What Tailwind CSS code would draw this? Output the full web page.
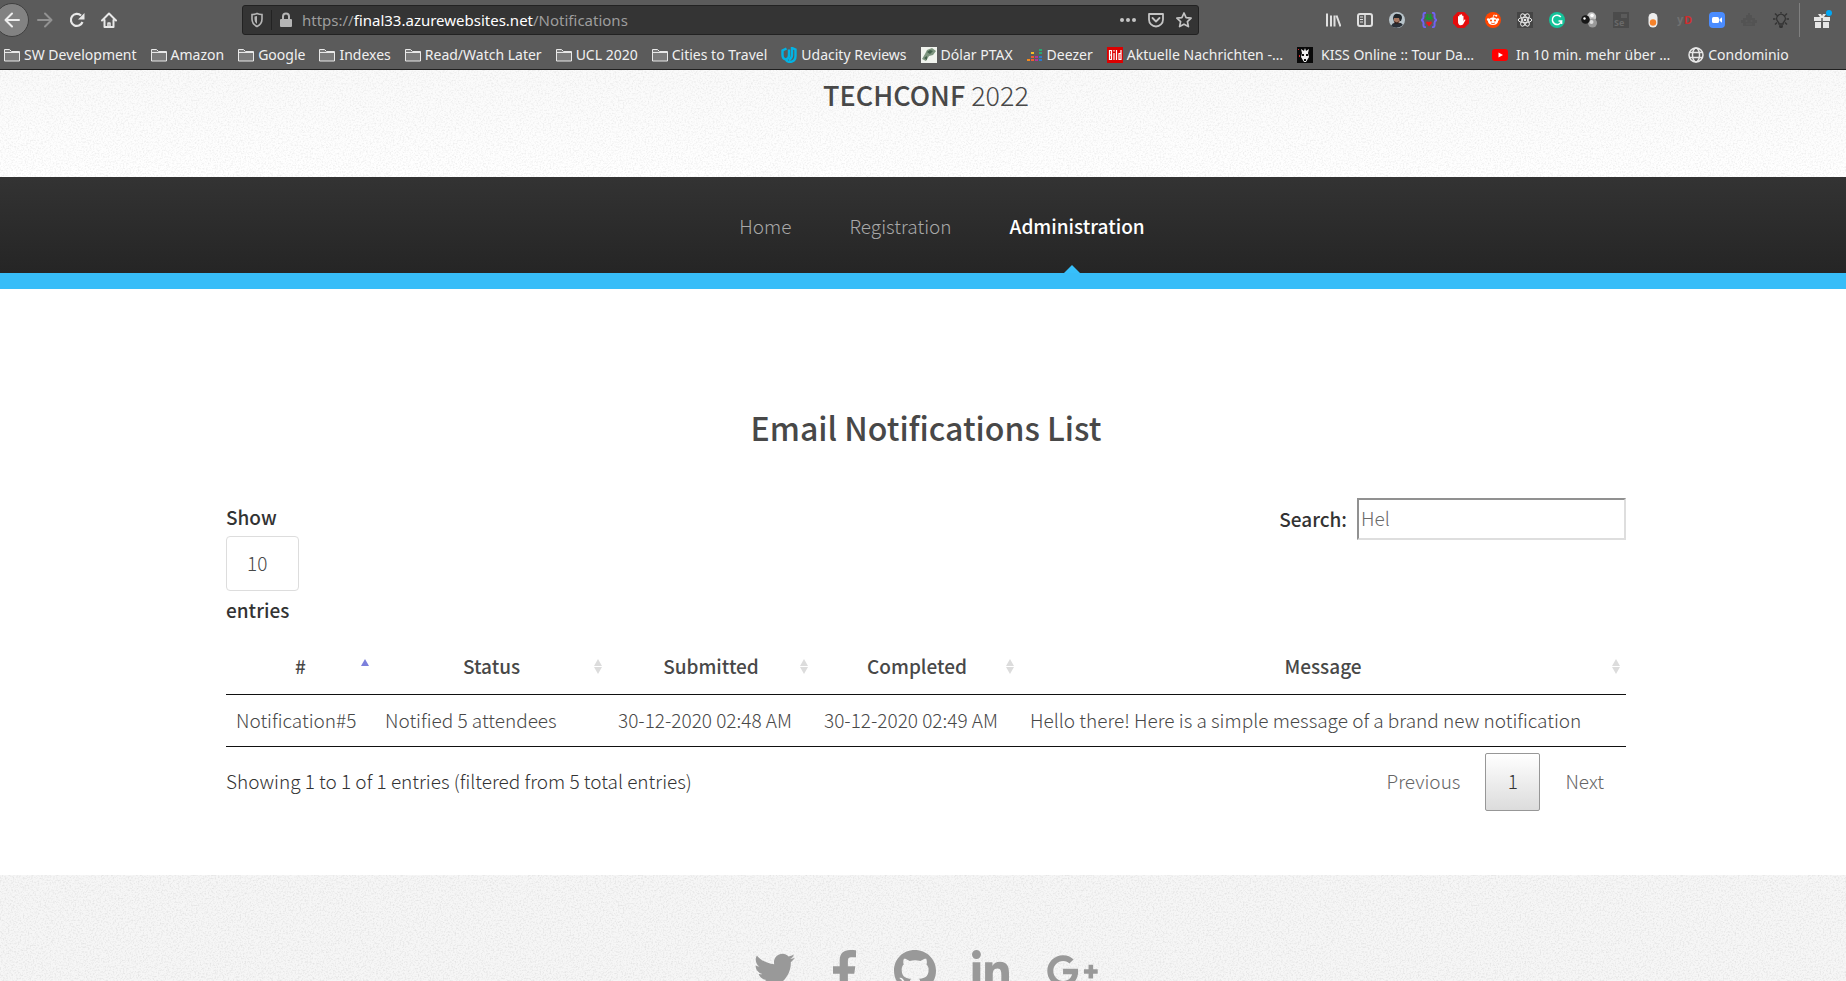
<!DOCTYPE html>
<html lang="en">
<head>
<meta charset="utf-8">
<title>TechConf 2022 - Notifications</title>
<script src="https://cdn.jsdelivr.net/npm/@tailwindcss/browser@4"></script>
</head>
<body class="flex h-screen flex-col overflow-hidden bg-white font-['Noto_Sans_CJK_SC','Source_Sans_Pro',sans-serif] text-[19px] font-light text-[#484848]">

<svg class="hidden">
  <symbol id="folder" viewBox="0 0 16 16"><path d="M.5 14V2.500h5l2 2h8V14z" fill="#7b7b7b" stroke="#e8e8e8"/><path d="M.5 5.500h15" stroke="#e8e8e8"/></symbol>
  <symbol id="sort" viewBox="0 0 8 15"><path d="M4 0l4 7H0zM4 15l4-7H0z" fill="#dcdcdc"/></symbol>
</svg>

<!-- Browser chrome -->
<div class="shrink-0 border-b border-[#1f1f1f] bg-[#5b5b5b] font-['Noto_Sans',sans-serif] text-[15px] font-normal text-[#f0f0f0]">
  <div class="flex h-10 items-center">
    <div class="flex w-[242px] shrink-0 items-center gap-4">
      <button aria-label="Back" class="-ml-[5px] flex size-[34px] shrink-0 items-center justify-center rounded-full border border-[#404040] bg-[#828282]"><svg class="size-4" viewBox="0 0 16 16" fill="none" stroke="#eee" stroke-width="2" stroke-linecap="round" stroke-linejoin="round"><path d="M15 8H2M8 1.500L1.500 8 8 14.500"/></svg></button>
      <button aria-label="Forward" class="-ml-2"><svg class="size-4" viewBox="0 0 16 16" fill="none" stroke="#929292" stroke-width="2" stroke-linecap="round" stroke-linejoin="round"><path d="M1 8h13M8 1.500L14.500 8 8 14.500"/></svg></button>
      <button aria-label="Reload"><svg class="size-4" viewBox="0 0 16 16" fill="none" stroke="#e8e8e8" stroke-width="2.200"><path d="M13.500 10A6 6 0 1 1 12 3.500"/><path d="M15.500 1v6.500H9z" fill="#e8e8e8" stroke="none"/></svg></button>
      <button aria-label="Home"><svg class="size-4" viewBox="0 0 16 16" fill="none" stroke="#e8e8e8" stroke-width="2" stroke-linejoin="round" stroke-linecap="round"><path d="M1 8.500L8 1.500l7 7M3.500 8v7h9V8"/><path d="M7 15v-4h2v4" stroke-width="1.500"/></svg></button>
    </div>
    <div class="flex h-[30px] w-[957px] shrink-0 items-center rounded-[3px] border border-[#222] bg-[#343434] px-2 text-[#9d9d9d]">
      <svg class="h-4 w-3" viewBox="0 0 12 16" fill="none" stroke="#b5b5b5" stroke-width="1.600"><path d="M1 2.500Q4 2.500 6 1.500q2 1 5 1V7q0 5-5 7.500Q1 12 1 7z"/><path d="M6 4v8Q3.500 10.500 3.500 7V4.500z" fill="#b5b5b5" stroke="none"/></svg>
      <span class="mx-2 h-5 w-px bg-[#222]"></span>
      <svg class="h-4 w-3" viewBox="0 0 12 16"><path d="M3 8V4.500a3 3 0 0 1 6 0V8" fill="none" stroke="#b5b5b5" stroke-width="2"/><rect y="7" width="12" height="8" rx="1" fill="#b5b5b5"/></svg>
      <span class="ml-[10px] flex-1 whitespace-nowrap">https://<span class="text-white">final33.azurewebsites.net</span>/Notifications</span>
      <div class="flex items-center gap-3">
        <button aria-label="Page actions"><svg class="size-4" viewBox="0 0 16 16" fill="#c4c4c4"><circle cx="2" cy="8" r="2"/><circle cx="8" cy="8" r="2"/><circle cx="14" cy="8" r="2"/></svg></button>
        <button aria-label="Save to Pocket"><svg class="size-4" viewBox="0 0 16 16" fill="none" stroke="#c4c4c4" stroke-width="1.800" stroke-linejoin="round" stroke-linecap="round"><path d="M1 2h14v5.500a7 7 0 0 1-14 0z"/><path d="M4.500 6L8 9.500 11.500 6"/></svg></button>
        <button aria-label="Bookmark" class="-mr-[2px]"><svg class="size-4" viewBox="0 0 16 16" fill="none" stroke="#c4c4c4" stroke-width="1.700" stroke-linejoin="round"><path d="M8 1l2.100 4.600 5 .6-3.700 3.400 1 5L8 12.200l-4.400 2.400 1-5L.9 6.200l5-.6z"/></svg></button>
      </div>
    </div>
    <div class="ml-auto flex items-center gap-4 pr-[10px]">
      <svg class="size-4" viewBox="0 0 16 16" stroke="#e0e0e0" stroke-width="2"><path d="M2 1.500v13M6 3.500v11M9.500 3.500v11M11.500 3.500l4 11"/></svg>
      <svg class="size-4" viewBox="0 0 16 16" fill="none" stroke="#e0e0e0" stroke-width="2"><rect x="1" y="2" width="14" height="12" rx="2"/><path d="M8 2v12" stroke-width="1.500"/><path d="M3 5h3M3 7.500h3M3 10h3" stroke-width="1.200"/></svg>
      <svg class="size-4" viewBox="0 0 16 16"><circle cx="8" cy="8" r="8" fill="#b8c4ca"/><path d="M4 6q1-5 5-4 4 0 4 4l-1 3-7 1z" fill="#20262b"/><path d="M5 6h5l1 4-3 3-3-3z" fill="#a87760"/><path d="M2 14q2-4 5-3l5 0 2 2Q8 18 2 14z" fill="#2a3038"/><path d="M5 9l3 1.500L10 9l-1 3H6z" fill="#30211e"/></svg>
      <svg class="size-4" viewBox="0 0 16 16"><path d="M5 .8Q2 .5 2.500 4q.3 3-2 4 2.300 1 2 4-.5 3.500 2.500 3.200M11 .8q3-.3 2.500 3.200-.3 3 2 4-2.300 1-2 4 .5 3.500-2.500 3.200" fill="none" stroke="#6f62f2" stroke-width="2"/><path d="M6.500 2v5M9.500 2v5M4.500 6q3.500 2 7 0" stroke="#159b2c" stroke-width="1.800" fill="none"/><path d="M8 14.500L5 11q0-2.500 3-1 3-1.500 3 1z" fill="#ef1616"/></svg>
      <svg class="size-4" viewBox="0 0 16 16"><path d="M4.700 0h6.600L16 4.700v6.600L11.300 16H4.700L0 11.300V4.700z" fill="#e40d0d"/><path d="M5 9V4.500q.7-.8 1.300 0V3q.8-.9 1.400 0v-.5q.8-.7 1.400 0V4q.8-.8 1.400 0v5l1-1.500q1-.3 1 .5L10 12.500q-2 1.500-4 .3Q4.700 12 5 9z" fill="#fff"/></svg>
      <svg class="size-4" viewBox="0 0 16 16"><circle cx="8" cy="8" r="8" fill="#ff4500"/><ellipse cx="8" cy="9.300" rx="5" ry="3.700" fill="#fff"/><circle cx="3.200" cy="7.600" r="1.300" fill="#fff"/><circle cx="12.800" cy="7.600" r="1.300" fill="#fff"/><path d="M8 6l.7-3 2.500.6" stroke="#fff" fill="none" stroke-width=".8"/><circle cx="11.300" cy="3.700" r="1" fill="#fff"/><circle cx="6" cy="8.500" r="1" fill="#ff4500"/><circle cx="10" cy="8.500" r="1" fill="#ff4500"/><path d="M6 11q2 1.300 4 0" stroke="#ff4500" fill="none" stroke-width=".8"/></svg>
      <svg class="size-4" viewBox="0 0 16 16"><path d="M0 0h16v16H0z" fill="#454545"/><g fill="none" stroke="#e8e8e8"><ellipse cx="8" cy="8" rx="6.800" ry="2.700"/><ellipse cx="8" cy="8" rx="6.800" ry="2.700" transform="rotate(60 8 8)"/><ellipse cx="8" cy="8" rx="6.800" ry="2.700" transform="rotate(120 8 8)"/></g><circle cx="8" cy="8" r="1.300" fill="#e8e8e8"/></svg>
      <svg class="size-4" viewBox="0 0 16 16"><circle cx="8" cy="8" r="8" fill="#15c39a"/><path d="M11.800 5A4.700 4.700 0 1 0 12.600 9H9.500M12.600 9v3" fill="none" stroke="#fff" stroke-width="1.500"/></svg>
      <svg class="size-4" viewBox="0 0 16 16"><circle cx="10.500" cy="5" r="4.700" fill="#c9c9c9"/><circle cx="11.500" cy="11" r="4.500" fill="#9a9a9a"/><circle cx="10.500" cy="10" r="2" fill="#ddd"/><circle cx="4.500" cy="7.500" r="4.300" fill="#181818"/><circle cx="3.500" cy="6.500" r="1.200" fill="#fff"/><circle cx="11" cy="3.500" r="1.800" fill="#fff"/></svg>
      <svg class="size-4" viewBox="0 0 16 16"><path d="M0 0h16v16H0z" fill="#4b4b4b"/><path d="M8 2h6v4H8z" fill="#5b5b5b"/><text x="1" y="14" font-size="9" font-weight="700" fill="#696969">Se</text></svg>
      <svg class="size-4" viewBox="0 0 16 16"><rect x="3.500" y="1" width="9" height="14.500" rx="4.500" fill="#eee"/><circle cx="8" cy="10.500" r="3.200" fill="#f5822a"/></svg>
      <svg class="size-4" viewBox="0 0 16 16" font-weight="700" font-size="11"><text x="0" y="11" fill="#717171">y</text><text x="7" y="12" fill="#cf2d2d">D</text></svg>
      <svg class="size-4" viewBox="0 0 16 16"><rect width="16" height="16" rx="4" fill="#4a8cff"/><rect x="3" y="5" width="7" height="6" rx="1.500" fill="#fff"/><path d="M10.500 7.300L13 5.300v5.400l-2.500-2z" fill="#fff"/></svg>
      <svg class="size-4" viewBox="0 0 16 16" fill="#535353"><path d="M2 6h12v8H2zM0 8h16v3H0zM7 1h2v5H7zM5 3h6v3H5z"/><circle cx="5.500" cy="9" r="1" fill="#5b5b5b"/><circle cx="10.500" cy="9" r="1" fill="#5b5b5b"/><path d="M5 12h6" stroke="#5b5b5b"/></svg>
      <svg class="size-4" viewBox="0 0 16 16" fill="none" stroke="#333" stroke-width="1.400"><path d="M6 12q0-1.500-1.200-2.500a4.300 4.300 0 1 1 6.400 0Q10 10.500 10 12zM6 14h4M6.500 15.500h3M8 0v1.500M0 7h2.500M13.500 7H16M2 1.500l2 2M14 1.500l-2 2M2 12.500l2-2M14 12.500l-2-2"/></svg>
      <span class="-ml-[6px] -mr-[2px] h-[34px] w-px bg-[#808080]"></span>
      <svg class="h-5 w-[22px]" viewBox="0 0 22 20" fill="#e6e6e6"><path d="M0 7h6L4 4h3l1 2 1-2h3l-2 3h6v4H0zM1 12h6v6H1zM9 12h6v6H9z"/><path d="M8 8v10" stroke="#5b5b5b" stroke-width="1.500"/><circle cx="15" cy="3" r="3" fill="#00a7f5"/></svg>
    </div>
  </div>
  <nav aria-label="Bookmarks" class="flex h-[29px] items-center gap-[14px] whitespace-nowrap pl-1 text-sm">
    <a href="#" class="flex items-center gap-1"><svg class="size-4"><use href="#folder"/></svg>SW Development</a>
    <a href="#" class="flex items-center gap-1"><svg class="size-4"><use href="#folder"/></svg>Amazon</a>
    <a href="#" class="flex items-center gap-1"><svg class="size-4"><use href="#folder"/></svg>Google</a>
    <a href="#" class="flex items-center gap-1"><svg class="size-4"><use href="#folder"/></svg>Indexes</a>
    <a href="#" class="flex items-center gap-1"><svg class="size-4"><use href="#folder"/></svg>Read/Watch Later</a>
    <a href="#" class="flex items-center gap-1"><svg class="size-4"><use href="#folder"/></svg>UCL 2020</a>
    <a href="#" class="flex items-center gap-1"><svg class="size-4"><use href="#folder"/></svg>Cities to Travel</a>
    <a href="#" class="flex items-center gap-1"><svg class="size-4" viewBox="0 0 16 16" fill="none" stroke="#02b3e4" stroke-width="2.400"><path d="M5.500 1.500L1.500 3.500V8q0 4 3.500 4.500 3-.5 3-4.500V2.500"/><path d="M5 13q1.500 2 4.500 2 5-1 5-6V2.500L11 1v7q0 3-3 5"/></svg>Udacity Reviews</a>
    <a href="#" class="flex items-center gap-1"><svg class="size-4" viewBox="0 0 16 16"><path d="M0 0h16v16H0z" fill="#f1f4ee"/><path d="M1 12l3-5 2-4 5-2 4 3-3 4-4 1-3 5-2-1z" fill="#7d957e"/><path d="M6 5l3-2 3 1-3 3zM3 11l3-2v4z" fill="#42604a"/></svg>Dólar PTAX</a>
    <a href="#" class="flex items-center gap-1"><svg class="size-4" viewBox="0 0 16 16"><path d="M0 12h3v2H0z" fill="#f48a1d"/><path d="M4 12h3v2H4zM4 9h3v2H4z" fill="#ef5b30"/><path d="M4 5h3v2H4z" fill="#f6bd27"/><path d="M8 12h3v2H8zM8 9h3v2H8z" fill="#b43498"/><path d="M12 12h3v2h-3zM12 9h3v2h-3z" fill="#2a79cc"/><path d="M12 5h3v2h-3zM12 2h3v2h-3z" fill="#28a873"/></svg>Deezer</a>
    <a href="#" class="flex items-center gap-1"><svg class="size-4" viewBox="0 0 16 16"><path d="M0 0h16v16H0z" fill="#d00"/><path d="M2.500 3v10M2 3.500h2.500v9H2M3 8h2M7 6v7M7 3v1.500M9.500 3v10M14 3v10M14 12.500h-2v-6h2" fill="none" stroke="#fff" stroke-width="1.200"/></svg>Aktuelle Nachrichten -…</a>
    <a href="#" class="flex items-center gap-2"><svg class="size-4" viewBox="0 0 16 16"><path d="M0 0h16v16H0z" fill="#090909"/><path d="M5 6L4 2l3 2 1-3 1 3 3-2-1 4 1 4-3 5H7l-3-5z" fill="#eee"/><path d="M5 7h2v2H5zM9 7h2v2H9zM7 12h2v2H7z" fill="#111"/><path d="M1 2h1v1H1zM2 8h1v2H2z" fill="#df2a2a"/></svg>KISS Online :: Tour Da…</a>
    <a href="#" class="ml-1 flex items-center gap-2"><svg class="size-4" viewBox="0 0 16 16"><rect y="2" width="16" height="12" rx="3" fill="#f00"/><path d="M6.500 5.500L11 8l-4.500 2.500z" fill="#fff"/></svg>In 10 min. mehr über …</a>
    <a href="#" class="ml-1 flex items-center gap-1"><svg class="size-4" viewBox="0 0 16 16" fill="none" stroke="#e8e8e8" stroke-width="1.500"><circle cx="8" cy="8" r="7"/><ellipse cx="8" cy="8" rx="3.500" ry="7"/><path d="M1.500 5.500h13M1.500 10.500h13"/></svg>Condominio</a>
  </nav>
</div>

<!-- Site header -->
<header class="relative flex h-[107px] shrink-0 justify-center bg-gradient-to-b from-[#fafafa] to-white pl-[6px] pt-[5px]">
  <svg class="absolute inset-0 h-full w-full opacity-12" aria-hidden="true"><filter id="grain" x="0" y="0" width="100%" height="100%" color-interpolation-filters="sRGB"><feTurbulence type="fractalNoise" baseFrequency=".6" numOctaves="2"/><feColorMatrix values="0 0 0 0 .5  0 0 0 0 .5  0 0 0 0 .5  2.500 0 0 0 -1.100"/></filter><rect width="100%" height="100%" filter="url(#grain)"/></svg>
  <h1 class="relative text-[27px] leading-10 font-light"><strong class="font-medium">TECHCONF</strong> 2022</h1>
</header>
<nav aria-label="Main" class="flex h-24 shrink-0 items-center justify-center gap-[58px] bg-gradient-to-b from-[#333] to-[#252525] pt-[2px] pl-[38px] text-[#a8a8a8]">
  <a href="#">Home</a>
  <a href="#">Registration</a>
  <a href="#" class="relative flex h-full items-center font-medium text-white">Administration<svg class="absolute bottom-0 left-1/2 -ml-[13px] h-2 w-4" viewBox="0 0 16 8"><path d="M8 0l8 8H0z" fill="#37c0fb"/></svg></a>
</nav>
<div class="h-4 shrink-0 bg-[#37bdf8]"></div>

<!-- Notification list -->
<main class="h-[586px] shrink-0 pl-[6px]">
  <div class="mx-auto max-w-[1400px]">
    <h2 class="pt-[113px] text-center text-[32px] leading-[50px] font-medium">Email Notifications List</h2>
    <div class="flex items-start justify-between pt-[46px] font-medium text-[#333]">
      <label class="flex flex-col leading-[37px]">Show
        <select class="mt-px h-[55px] w-[73px] appearance-none rounded border border-[#ddd] bg-white px-5 pb-[2px] font-light text-[#484848]"><option>10</option></select>
        entries</label>
      <label class="flex items-center gap-[10px] leading-10">Search: <input type="text" value="Hel" class="h-[42px] w-[269px] border-2 border-t-[#919191] border-r-[#dedede] border-b-[#dedede] border-l-[#919191] px-[2px] pb-1 font-light text-[#6a6a6a] outline-none"></label>
    </div>
    <table class="mt-[10px] w-full table-fixed border-collapse border-b border-[#111]">
      <colgroup><col class="w-[149px]"><col class="w-[233px]"><col class="w-[206px]"><col class="w-[206px]"><col></colgroup>
      <thead>
        <tr class="h-[56px] border-b border-[#111]">
          <th class="relative px-[18px] font-medium">#<svg class="absolute top-[21px] right-[6px] h-[7px] w-2" viewBox="0 0 8 7"><path d="M4 0l4 7H0z" fill="#7c80dc"/></svg></th>
          <th class="relative px-[18px] font-medium">Status<svg class="absolute top-[21px] right-[6px] h-[15px] w-2"><use href="#sort"/></svg></th>
          <th class="relative px-[18px] font-medium">Submitted<svg class="absolute top-[21px] right-[6px] h-[15px] w-2"><use href="#sort"/></svg></th>
          <th class="relative px-[18px] font-medium">Completed<svg class="absolute top-[21px] right-[6px] h-[15px] w-2"><use href="#sort"/></svg></th>
          <th class="relative px-[18px] font-medium">Message<svg class="absolute top-[21px] right-[6px] h-[15px] w-2"><use href="#sort"/></svg></th>
        </tr>
      </thead>
      <tbody>
        <tr class="h-[52px] whitespace-nowrap">
          <td class="px-[10px]">Notification#5</td>
          <td class="px-[10px]">Notified 5 attendees</td>
          <td class="px-[10px]">30-12-2020 02:48 AM</td>
          <td class="px-[10px]">30-12-2020 02:49 AM</td>
          <td class="px-[10px]">Hello there! Here is a simple message of a brand new notification</td>
        </tr>
      </tbody>
    </table>
    <div class="flex items-center justify-between pt-[6px] text-[#333]">
      <p>Showing 1 to 1 of 1 entries (filtered from 5 total entries)</p>
      <div class="flex items-center gap-[3px] text-[#666]">
        <button class="h-[58px] px-[22px]">Previous</button>
        <button class="h-[58px] w-[55px] rounded-xs border border-[#979797] bg-gradient-to-b from-white to-[#dcdcdc] text-[#333]">1</button>
        <button class="h-[58px] px-[22px]">Next</button>
      </div>
    </div>
  </div>
</main>

<!-- Footer -->
<footer class="relative min-h-0 flex-1 bg-[#f6f6f6] pt-[75px] pl-[6px]">
  <svg class="absolute inset-0 h-full w-full opacity-15" aria-hidden="true"><rect width="100%" height="100%" filter="url(#grain)"/></svg>
  <div class="relative flex items-start justify-center gap-[38px] text-[#999]">
    <a href="#" aria-label="Twitter"><svg class="size-[41px]" viewBox="0 0 512 512" fill="currentColor"><path d="M459.370 151.716c.325 4.548.325 9.097.325 13.645 0 138.720-105.583 298.558-298.558 298.558-59.452 0-114.680-17.219-161.137-47.106 8.447.974 16.568 1.299 25.340 1.299 49.055 0 94.213-16.568 130.274-44.832-46.132-.975-84.792-31.188-98.112-72.772 6.498.974 12.995 1.624 19.818 1.624 9.421 0 18.843-1.300 27.614-3.573-48.081-9.747-84.143-51.980-84.143-102.985v-1.299c13.969 7.797 30.214 12.670 47.431 13.319-28.264-18.843-46.781-51.005-46.781-87.391 0-19.492 5.197-37.360 14.294-52.954 51.655 63.675 129.300 105.258 216.365 109.807-1.624-7.797-2.599-15.918-2.599-24.040 0-57.828 46.782-104.934 104.934-104.934 30.213 0 57.502 12.670 76.670 33.137 23.715-4.548 46.456-13.320 66.599-25.340-7.798 24.366-24.366 44.833-46.132 57.827 21.117-2.273 41.584-8.122 60.426-16.243-14.292 20.791-32.161 39.308-52.628 54.253z"/></svg></a>
    <a href="#" aria-label="Facebook"><svg class="h-[43px] w-[23px]" viewBox="0 0 264 512" preserveAspectRatio="none" fill="currentColor"><path d="M215.800 85H264V3.600C255.700 2.500 227.100 0 193.800 0 124.300 0 76.700 42.400 76.700 120.300V192H0v91h76.700v229h94V283h73.600l11.700-91h-85.300v-62.700c0-26.300 7.300-44.300 45.100-44.300z"/></svg></a>
    <a href="#" aria-label="GitHub"><svg class="size-[42px]" viewBox="0 8 496 496" fill="currentColor"><path d="M244.800 8C106.100 8 0 113.300 0 252c0 110.900 69.800 205.800 169.500 239.200 12.800 2.300 17.300-5.600 17.300-12.100 0-6.200-.3-40.400-.3-61.400 0 0-70 15-84.700-29.800 0 0-11.400-29.100-27.800-36.600 0 0-22.900-15.700 1.600-15.400 0 0 24.900 2 38.600 25.800 21.900 38.600 58.600 27.500 72.900 20.900 2.300-16 8.800-27.100 16-33.700-55.900-6.200-112.300-14.300-112.300-110.500 0-27.500 7.600-41.300 23.600-58.900-2.600-6.500-11.100-33.300 2.600-67.900 20.900-6.500 69 27 69 27 20-5.600 41.500-8.500 62.800-8.500s42.800 2.900 62.800 8.500c0 0 48.100-33.600 69-27 13.700 34.700 5.200 61.400 2.600 67.900 16 17.700 25.800 31.500 25.800 58.900 0 96.500-58.900 104.200-114.800 110.500 9.200 7.900 17 22.900 17 46.400 0 33.700-.3 75.400-.3 83.600 0 6.500 4.600 14.400 17.300 12.100C428.200 457.800 496 362.900 496 252 496 113.300 383.500 8 244.800 8z"/></svg></a>
    <a href="#" aria-label="LinkedIn" class="-ml-[2px]"><svg class="size-[37px]" viewBox="0 0 448 448" fill="currentColor"><path d="M100.280 448H7.400V148.900h92.880zM53.790 108.100C24.090 108.100 0 83.500 0 53.800a53.790 53.790 0 0 1 107.580 0c0 29.700-24.100 54.300-53.790 54.300zM447.900 448h-92.680V302.400c0-34.700-.7-79.200-48.290-79.200-48.290 0-55.690 37.700-55.690 76.700V448h-92.780V148.900h89.080v40.800h1.300c12.400-23.500 42.690-48.300 87.880-48.300 94 0 111.280 61.900 111.280 142.300V448z"/></svg></a>
    <a href="#" aria-label="Google Plus"><svg class="h-[42px] w-[51px]" viewBox="12 0 616 512" fill="currentColor"><path d="M386.061 228.496c1.834 9.692 3.143 19.384 3.143 31.956C389.204 370.205 315.599 448 204.800 448c-106.084 0-192-85.915-192-192s85.916-192 192-192c51.864 0 95.083 18.859 128.611 50.292l-52.126 50.030c-14.145-13.621-39.028-29.599-76.485-29.599-65.484 0-118.920 54.221-118.920 121.277 0 67.056 53.436 121.277 118.920 121.277 75.961 0 104.513-54.745 108.965-82.773H204.800v-66.009h181.261zm185.406 6.437V179.200h-56.001v55.733h-55.733v56.001h55.733v55.733h56.001v-55.733H627.200v-56.001h-55.733z"/></svg></a>
  </div>
</footer>
</body>
</html>
